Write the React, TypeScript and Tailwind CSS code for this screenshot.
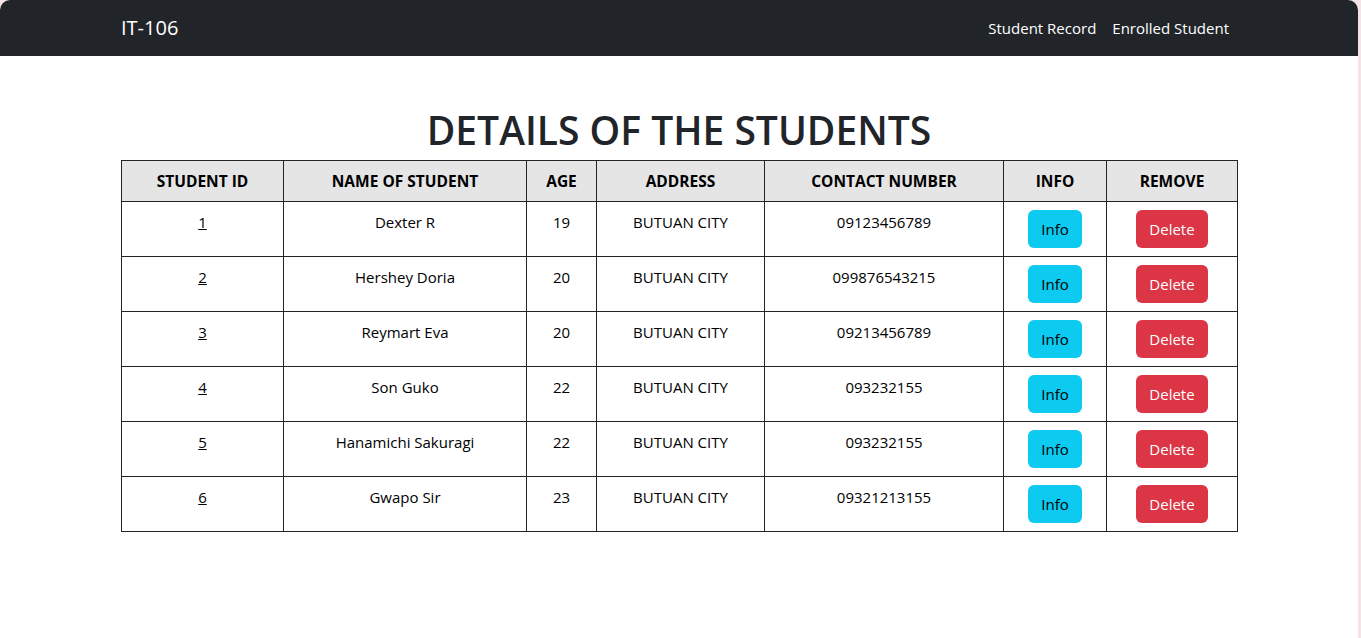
const students = [
  { id: 1, name: "Dexter R", age: 19, address: "BUTUAN CITY", contact: "09123456789" },
  { id: 2, name: "Hershey Doria", age: 20, address: "BUTUAN CITY", contact: "099876543215" },
  { id: 3, name: "Reymart Eva", age: 20, address: "BUTUAN CITY", contact: "09213456789" },
  { id: 4, name: "Son Guko", age: 22, address: "BUTUAN CITY", contact: "093232155" },
  { id: 5, name: "Hanamichi Sakuragi", age: 22, address: "BUTUAN CITY", contact: "093232155" },
  { id: 6, name: "Gwapo Sir", age: 23, address: "BUTUAN CITY", contact: "09321213155" },
];

const headers = [
  { label: "STUDENT ID", w: "w-[162px]" },
  { label: "NAME OF STUDENT", w: "w-[243px]" },
  { label: "AGE", w: "w-[70px]" },
  { label: "ADDRESS", w: "w-[168px]" },
  { label: "CONTACT NUMBER", w: "w-[239px]" },
  { label: "INFO", w: "w-[103px]" },
  { label: "REMOVE", w: "w-[131px]" },
];

export default function App() {
  return (
    <div className="h-[638px] w-[1361px] overflow-hidden bg-[#f3e4e6] font-['Open_Sans',sans-serif]">
      <div className="h-full w-[1358px] rounded-t-[10px] bg-white">
        {/* Navbar */}
        <nav className="h-14 rounded-t-[10px] bg-[#212529]">
          <div className="mx-auto flex h-full w-[1140px] items-center justify-between px-3">
            <span className="text-[20px] text-white">IT-106</span>
            <div className="flex text-[15px] text-white">
              <a className="px-2 py-2">Student Record</a>
              <a className="px-2 py-2">Enrolled Student</a>
            </div>
          </div>
        </nav>

        <div className="mx-auto w-[1140px] px-3">
          <h1 className="mt-[50px] mb-[6px] text-center text-[39px] font-semibold leading-[48px] text-[#212529]">
            DETAILS OF THE STUDENTS
          </h1>

          <table className="w-[1115px] table-fixed border-collapse text-center text-[15px] text-black">
            <thead>
              <tr className="bg-[#e5e5e5]">
                {headers.map((h) => (
                  <th
                    key={h.label}
                    className={`${h.w} border border-[#212529] py-2 text-[15.5px] font-bold leading-6`}
                  >
                    {h.label}
                  </th>
                ))}
              </tr>
            </thead>
            <tbody>
              {students.map((s) => (
                <tr key={s.id} className="h-[55px]">
                  <td className="border border-[#212529] px-2 py-2 align-top leading-6">
                    <a className="underline">{s.id}</a>
                  </td>
                  <td className="border border-[#212529] px-2 py-2 align-top leading-6">{s.name}</td>
                  <td className="border border-[#212529] px-2 py-2 align-top leading-6">{s.age}</td>
                  <td className="border border-[#212529] px-2 py-2 align-top leading-6">{s.address}</td>
                  <td className="border border-[#212529] px-2 py-2 align-top leading-6">{s.contact}</td>
                  <td className="border border-[#212529] px-2 py-2 align-top">
                    <button className="h-[38px] rounded-[6px] bg-[#0dcaf0] px-[13px] text-[15px] text-black">
                      Info
                    </button>
                  </td>
                  <td className="border border-[#212529] px-2 py-2 align-top">
                    <button className="h-[38px] rounded-[6px] bg-[#dc3545] px-[13px] text-[15px] text-white">
                      Delete
                    </button>
                  </td>
                </tr>
              ))}
            </tbody>
          </table>
        </div>
      </div>
    </div>
  );
}
